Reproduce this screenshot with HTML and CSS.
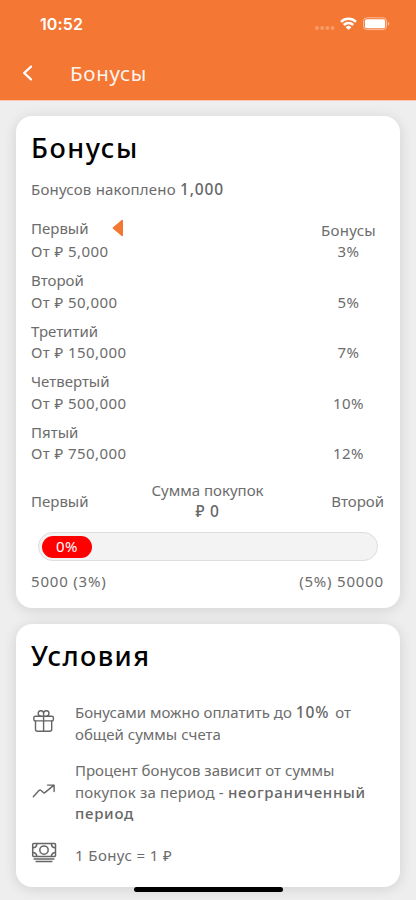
FILE: index.html
```
<!DOCTYPE html>
<html lang="ru">
<head>
<meta charset="utf-8">
<meta name="viewport" content="width=device-width, initial-scale=1">
<title>Бонусы</title>
<link rel="stylesheet" href="styles.css">
</head>
<body>
<header class="top">
  <div class="status">
    <span class="time">10:52</span>
    <svg class="indicators" width="78" height="16" viewBox="0 0 78 16">
      <g fill="#fff" opacity=".28"><circle cx="5" cy="12" r="1.9"/><circle cx="10.2" cy="12" r="1.9"/><circle cx="15.4" cy="12" r="1.9"/><circle cx="20.6" cy="12" r="1.9"/></g>
      <g fill="none" stroke="#fff" stroke-width="2.5"><path d="M29 5.8a10.8 10.8 0 0 1 15 0"/><path d="M31.8 9a6.8 6.8 0 0 1 9.4 0"/></g>
      <path d="M36.5 14l-2.8-2.8a4 4 0 0 1 5.6 0z" fill="#fff"/>
      <rect x="51.5" y="1.8" width="23" height="11.8" rx="3.4" fill="none" stroke="#fff" opacity=".5"/>
      <rect x="52.9" y="3.2" width="20.3" height="9" rx="1.8" fill="#fff"/>
      <path d="M75.9 5.8q1.5.5 1.5 1.9t-1.5 1.9z" fill="#fff" opacity=".5"/>
    </svg>
  </div>
  <nav class="bar">
    <svg class="back" width="12" height="18" viewBox="0 0 12 18"><path d="M10 2.6 3.2 9l6.8 6.4" fill="none" stroke="#fff" stroke-width="2.3" stroke-linecap="round" stroke-linejoin="round"/></svg>
    <span class="bar-title">Бонусы</span>
  </nav>
</header>
<main>
  <section class="card bonuses">
    <h1>Бонусы</h1>
    <p class="saved">Бонусов накоплено <b>1,000</b></p>
    <div class="level first">
      <div><div class="name">Первый<svg class="marker" width="12" height="18" viewBox="0 0 12 18"><path d="M1.3 9 10.2 1.6v14.8z" fill="#f47734" stroke="#f47734" stroke-width="1.6" stroke-linejoin="round"/></svg></div><div class="sum">От ₽ 5,000</div></div>
      <div class="rate"><div class="rate-head">Бонусы</div><div>3%</div></div>
    </div>
    <div class="level"><div><div class="name">Второй</div><div class="sum">От ₽ 50,000</div></div><div class="rate">5%</div></div>
    <div class="level"><div><div class="name">Третитий</div><div class="sum">От ₽ 150,000</div></div><div class="rate">7%</div></div>
    <div class="level"><div><div class="name">Четвертый</div><div class="sum">От ₽ 500,000</div></div><div class="rate">10%</div></div>
    <div class="level"><div><div class="name">Пятый</div><div class="sum">От ₽ 750,000</div></div><div class="rate">12%</div></div>
    <div class="progress-head">
      <span class="side">Первый</span>
      <div class="total">Сумма покупок<br><b>₽ 0</b></div>
      <span class="side end">Второй</span>
    </div>
    <div class="track"><div class="fill">0%</div></div>
    <div class="limits"><span>5000 (3%)</span><span>(5%) 50000</span></div>
  </section>
  <section class="card terms">
    <h1 class="terms-title">Условия</h1>
    <div class="term gift">
      <svg width="24" height="26" viewBox="0 0 24 26" fill="none" stroke="#666" stroke-width="1.4" stroke-linejoin="round" stroke-linecap="round"><rect x="2.8" y="8.2" width="19.6" height="4.7" rx="1.5"/><path d="M4.5 13v8.3a2 2 0 0 0 2 2h12.2a2 2 0 0 0 2-2V13M12.6 8.2v15M12.6 8.2V5.1a2.7 2.7 0 1 0-2.7 3.1M12.6 8.2V5.1a2.7 2.7 0 1 1 2.7 3.1"/></svg>
      <p>Бонусами можно оплатить до <b class="ten">10%</b> от<br>общей суммы счета</p>
    </div>
    <div class="term trend">
      <svg width="24" height="26" viewBox="0 0 24 26" fill="none" stroke="#666" stroke-width="1.4" stroke-linejoin="round" stroke-linecap="round"><path d="M2.3 18.7 8.2 12.3q.8-.8 1.7 0l2.4 2.3q.8.8 1.6 0l9-7.5M16.5 7.1h6.6v6.4"/></svg>
      <p>Процент бонусов зависит от суммы<br><span class="wide">покупок за период - </span><b>неограниченный</b><br><b>период</b></p>
    </div>
    <div class="term money">
      <svg width="26" height="26" viewBox="0 0 26 26" fill="none" stroke="#666" stroke-width="1.5" stroke-linejoin="round"><rect x="1.7" y="3.6" width="22.8" height="13" rx="1"/><circle cx="13" cy="10.1" r="4.2"/><path d="M1.7 7.8c2.7 0 4-1.5 4.2-4.2M24.5 7.8c-2.7 0-4-1.5-4.2-4.2M1.7 12.4c2.7 0 4 1.5 4.2 4.2M24.5 12.4c-2.7 0-4 1.5-4.2 4.2M2.6 18.9h20.8M4.6 21.4h16.8"/></svg>
      <p class="rule">1 Бонус = 1 ₽</p>
    </div>
  </section>
</main>
<div class="home"></div>
</body>
</html>
```
FILE: styles.css
```
* { box-sizing: border-box; }
body {
  margin: 0;
  height: 900px;
  overflow: hidden;
  background: #eee;
  color: #6c6c6c;
  font: 400 15px/21.5px "Noto Sans", sans-serif;
}
p, h1 { margin: 0; }
b { color: #666; font-weight: 500; letter-spacing: .72px; }
.top { height: 100px; background: #f47734; color: #fff; box-shadow: 0 1px 0 #fbc7ae; }
.status { height: 48px; padding: 16px 26px 0 40px; display: flex; justify-content: space-between; }
.time { font: 600 16px/16px Inter, sans-serif; letter-spacing: .1px; }
.bar { height: 50px; padding-left: 21px; display: flex; align-items: center; }
.bar-title { margin-left: 37px; font-size: 20.5px; line-height: 30px; font-weight: 400; letter-spacing: .7px; opacity: .92; }
main { padding: 16px; display: grid; gap: 16px; }
.card {
  padding: 0 16px 0 15px;
  border-radius: 16px;
  background: #fff;
  box-shadow: 0 2px 14px rgba(0, 0, 0, .12);
}
.bonuses { height: 492px; }
.terms { height: 263px; }
h1 { padding-top: 12px; color: #000; font-size: 27px; line-height: 40px; font-weight: 500; letter-spacing: 1.6px; }
.terms-title { letter-spacing: 1.4px; margin-bottom: 26px; }
.saved { margin: 11px 0 18px; letter-spacing: .2px; white-space: nowrap; }
.saved b { font-size: 15.5px; letter-spacing: .9px; }
.level { height: 50.5px; display: flex; justify-content: space-between; align-items: flex-start; }
.level.first { height: 51.5px; }
.name { display: flex; align-items: center; }
.first .name { margin: -1px 0 2px; }
.marker { margin-left: 23px; }
.sum { letter-spacing: .43px; }
.rate { width: 71px; padding-top: 21.5px; text-align: center; letter-spacing: .5px; }
.first .rate { padding-top: 1px; }
.rate-head { letter-spacing: .3px; }
.progress-head { margin-top: 7px; height: 45px; display: grid; grid-template-columns: 1fr auto 1fr; align-items: center; }
.end { text-align: right; }
.total { text-align: center; line-height: 21px; margin-bottom: 2px; }
.total b { font-size: 15.5px; }
.track { margin: 8px 6px 0 7px; height: 29px; padding: 3px; border: 1px solid #ddd; border-radius: 15px; background: #f3f3f3; }
.fill { width: 50px; height: 21.5px; border-radius: 11px; background: #f00; color: #fff; text-align: center; line-height: 21.5px; letter-spacing: .6px; }
.limits { margin-top: 10px; display: flex; justify-content: space-between; letter-spacing: .8px; }
.term { display: grid; grid-template-columns: 44px 1fr; align-items: center; margin-bottom: 15px; white-space: nowrap; }
.ten { margin: 0 2px 0 0; font-size: 15.5px; letter-spacing: .9px; }
.gift svg { margin-bottom: 6px; }
.trend svg { margin-bottom: 3px; }
.trend { margin-bottom: 15px; }
.money svg { margin-bottom: 4px; }
.wide { letter-spacing: .18px; }
.rule { padding-top: 2px; letter-spacing: .4px; }
.home { position: absolute; left: 134px; top: 887px; width: 149px; height: 5px; border-radius: 3px; background: #000; }
```
